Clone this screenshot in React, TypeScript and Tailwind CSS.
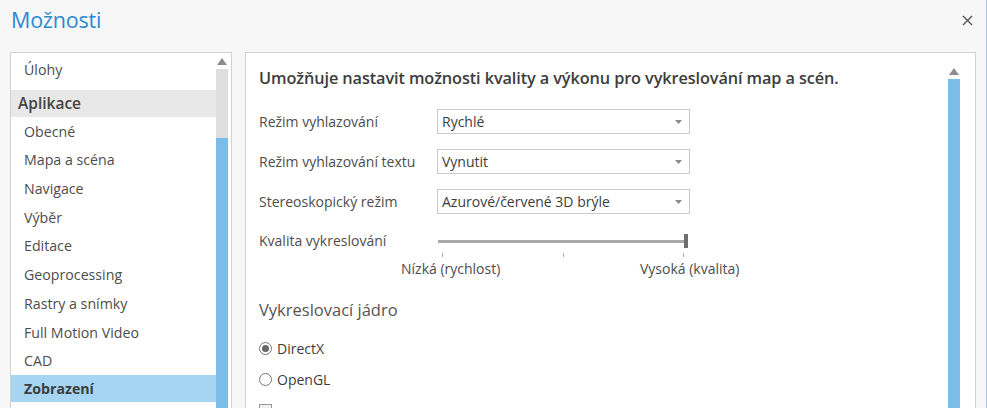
import React from 'react';

const items = [
  'Obecné',
  'Mapa a scéna',
  'Navigace',
  'Výběr',
  'Editace',
  'Geoprocessing',
  'Rastry a snímky',
  'Full Motion Video',
  'CAD',
];

const selects = [
  { label: 'Režim vyhlazování', value: 'Rychlé' },
  { label: 'Režim vyhlazování textu', value: 'Vynutit' },
  { label: 'Stereoskopický režim', value: 'Azurové/červené 3D brýle' },
];

function Caret() {
  return (
    <svg width="7" height="4" viewBox="0 0 7 4" className="mr-[7px]">
      <path d="M0 0h7L3.5 4z" fill="#8a8a8a" />
    </svg>
  );
}

function UpArrow() {
  return (
    <svg width="10" height="7" viewBox="0 0 10 7">
      <path d="M0 7L5 0l5 7z" fill="#8c8c8c" />
    </svg>
  );
}

export default function App() {
  return (
    <div
      className="w-[987px] h-[408px] overflow-hidden bg-[#f7f7f7] relative text-[#4d4d4d]"
      style={{ fontFamily: '"Open Sans", "Noto Sans", sans-serif' }}
    >
      {/* Title bar */}
      <div className="flex items-center justify-between h-[40px] pl-[11px] pr-[14px]">
        <h1 className="text-[21.5px] text-[#2a8ad0] font-normal tracking-[-0.2px]">Možnosti</h1>
        <svg width="11" height="11" viewBox="0 0 11 11">
          <path d="M1 1l9 9M10 1l-9 9" stroke="#555" strokeWidth="1.4" />
        </svg>
      </div>
      <div className="absolute right-0 top-0 bottom-0 w-[1px] bg-[#9fcdee]" />

      <div className="flex mt-[12px] pl-[10px] gap-[13px]">
        {/* Left nav */}
        <div className="w-[222px] h-[360px] bg-white border border-[#d2d2d2] border-b-0 flex">
          <div className="flex-1">
            <div className="h-[33px] flex items-center pl-[13px] text-[14.2px]">Úlohy</div>
            <div className="h-[27px] mt-[4px] bg-[#e8e8e8] flex items-center pl-[7px] text-[15.5px] font-semibold text-[#444]">
              Aplikace
            </div>
            {items.map(i => (
              <div key={i} className="h-[28.7px] flex items-center pl-[13px] text-[14.2px]">
                {i}
              </div>
            ))}
            <div className="h-[27px] bg-[#a6d5f3] flex items-center pl-[13px] text-[14.2px] font-bold text-[#3d3d3d]">
              Zobrazení
            </div>
          </div>
          <div className="w-[12px] mr-[3px] flex flex-col items-center pt-[5px]">
            <UpArrow />
            <div className="w-full h-[69px] mt-[4px] bg-[#dedede]" />
            <div className="w-full flex-1 bg-[#7bbde8]" />
          </div>
        </div>

        {/* Right content */}
        <div className="w-[731px] h-[360px] bg-white border border-[#d2d2d2] border-b-0 flex">
          <div className="flex-1 pl-[13px] pt-[13px]">
            <h2 className="text-[16.3px] font-semibold text-[#3d3d3d] tracking-[-0.1px]">
              Umožňuje nastavit možnosti kvality a výkonu pro vykreslování map a scén.
            </h2>
            <div className="mt-[19px] flex flex-col gap-[15px]">
              {selects.map(s => (
                <div key={s.label} className="flex items-center h-[25px]">
                  <span className="w-[178px] text-[14px]">{s.label}</span>
                  <div className="w-[253px] h-[25px] border border-[#c9c9c9] flex items-center justify-between pl-[4px] text-[14px] text-[#3d3d3d]">
                    <span>{s.value}</span>
                    <Caret />
                  </div>
                </div>
              ))}
            </div>

            {/* Slider */}
            <div className="mt-[15px] flex">
              <span className="w-[179px] text-[14px] leading-[24px]">Kvalita vykreslování</span>
              <div className="w-[250px]">
                <div className="h-[24px] flex items-center">
                  <div className="flex-1 h-[3px] bg-[#a8a8a8]" />
                  <div className="w-[4px] h-[14px] bg-[#6e6e6e] -ml-[3px]" />
                </div>
                <div className="flex justify-between px-[4px] h-[6px]">
                  <div className="w-[1px] h-[4px] bg-[#b0b0b0]" />
                  <div className="w-[1px] h-[4px] bg-[#b0b0b0]" />
                  <div className="w-[1px] h-[4px] bg-[#b0b0b0]" />
                </div>
              </div>
            </div>
            <div className="flex -mt-[1px] text-[14px]">
              <span className="ml-[142px] w-[239px]">Nízká (rychlost)</span>
              <span>Vysoká (kvalita)</span>
            </div>

            <div className="mt-[19px] text-[16.5px] text-[#555]">Vykreslovací jádro</div>

            <div className="mt-[15px] flex flex-col gap-[11px] text-[14px] text-[#3d3d3d]">
              <label className="flex items-center gap-[5px] h-[20px]">
                <span className="w-[13px] h-[13px] rounded-full border border-[#777] flex items-center justify-center">
                  <span className="w-[7px] h-[7px] rounded-full bg-[#666]" />
                </span>
                DirectX
              </label>
              <label className="flex items-center gap-[5px] h-[20px]">
                <span className="w-[13px] h-[13px] rounded-full border border-[#777]" />
                OpenGL
              </label>
              <label className="flex items-center gap-[5px] h-[20px]">
                <span className="w-[13px] h-[13px] border border-[#999] bg-[#f0f0f0]" />
              </label>
            </div>
          </div>
          <div className="w-[12px] mr-[15px] flex flex-col items-center pt-[15px]">
            <UpArrow />
            <div className="w-full flex-1 mt-[4px] bg-[#7bbde8]" />
          </div>
        </div>
      </div>
    </div>
  );
}
